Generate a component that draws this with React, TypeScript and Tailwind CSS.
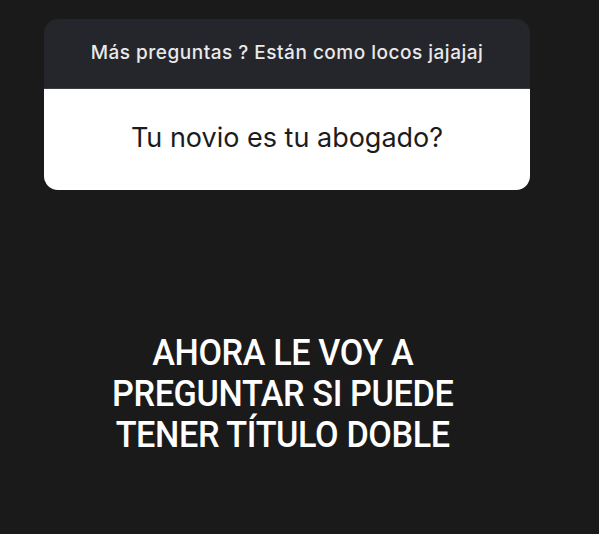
export default function App() {
  return (
    <div className="w-[599px] h-[534px] bg-[#1a1a1a] overflow-hidden flex">
      <div className="ml-[44px] w-[486px] pt-[19px] flex flex-col">
        {/* Question card */}
        <div className="rounded-[14px] overflow-hidden">
          <div className="h-[70px] bg-[#24262b] flex items-center justify-center border-b border-[#3a3c40]">
            <span className="text-[#e9e9ea] text-[19px] font-medium font-['Inter',sans-serif] tracking-[0.5px]">
              Más preguntas ? Están como locos jajajaj
            </span>
          </div>
          <div className="h-[101px] bg-white flex items-center justify-center">
            <span className="text-[#1c1c1c] text-[27px] font-['Inter',sans-serif] pb-[2px]">
              Tu novio es tu abogado?
            </span>
          </div>
        </div>

        {/* Caption */}
        <div className="mt-[143px] pr-[9px] flex flex-col items-center text-white text-[36px] leading-[41px] font-medium font-['Roboto',sans-serif] tracking-[-0.4px] uppercase text-center scale-x-[0.95]">
          <span>Ahora le voy a</span>
          <span>Preguntar si puede</span>
          <span>Tener título doble</span>
        </div>
      </div>
    </div>
  );
}
